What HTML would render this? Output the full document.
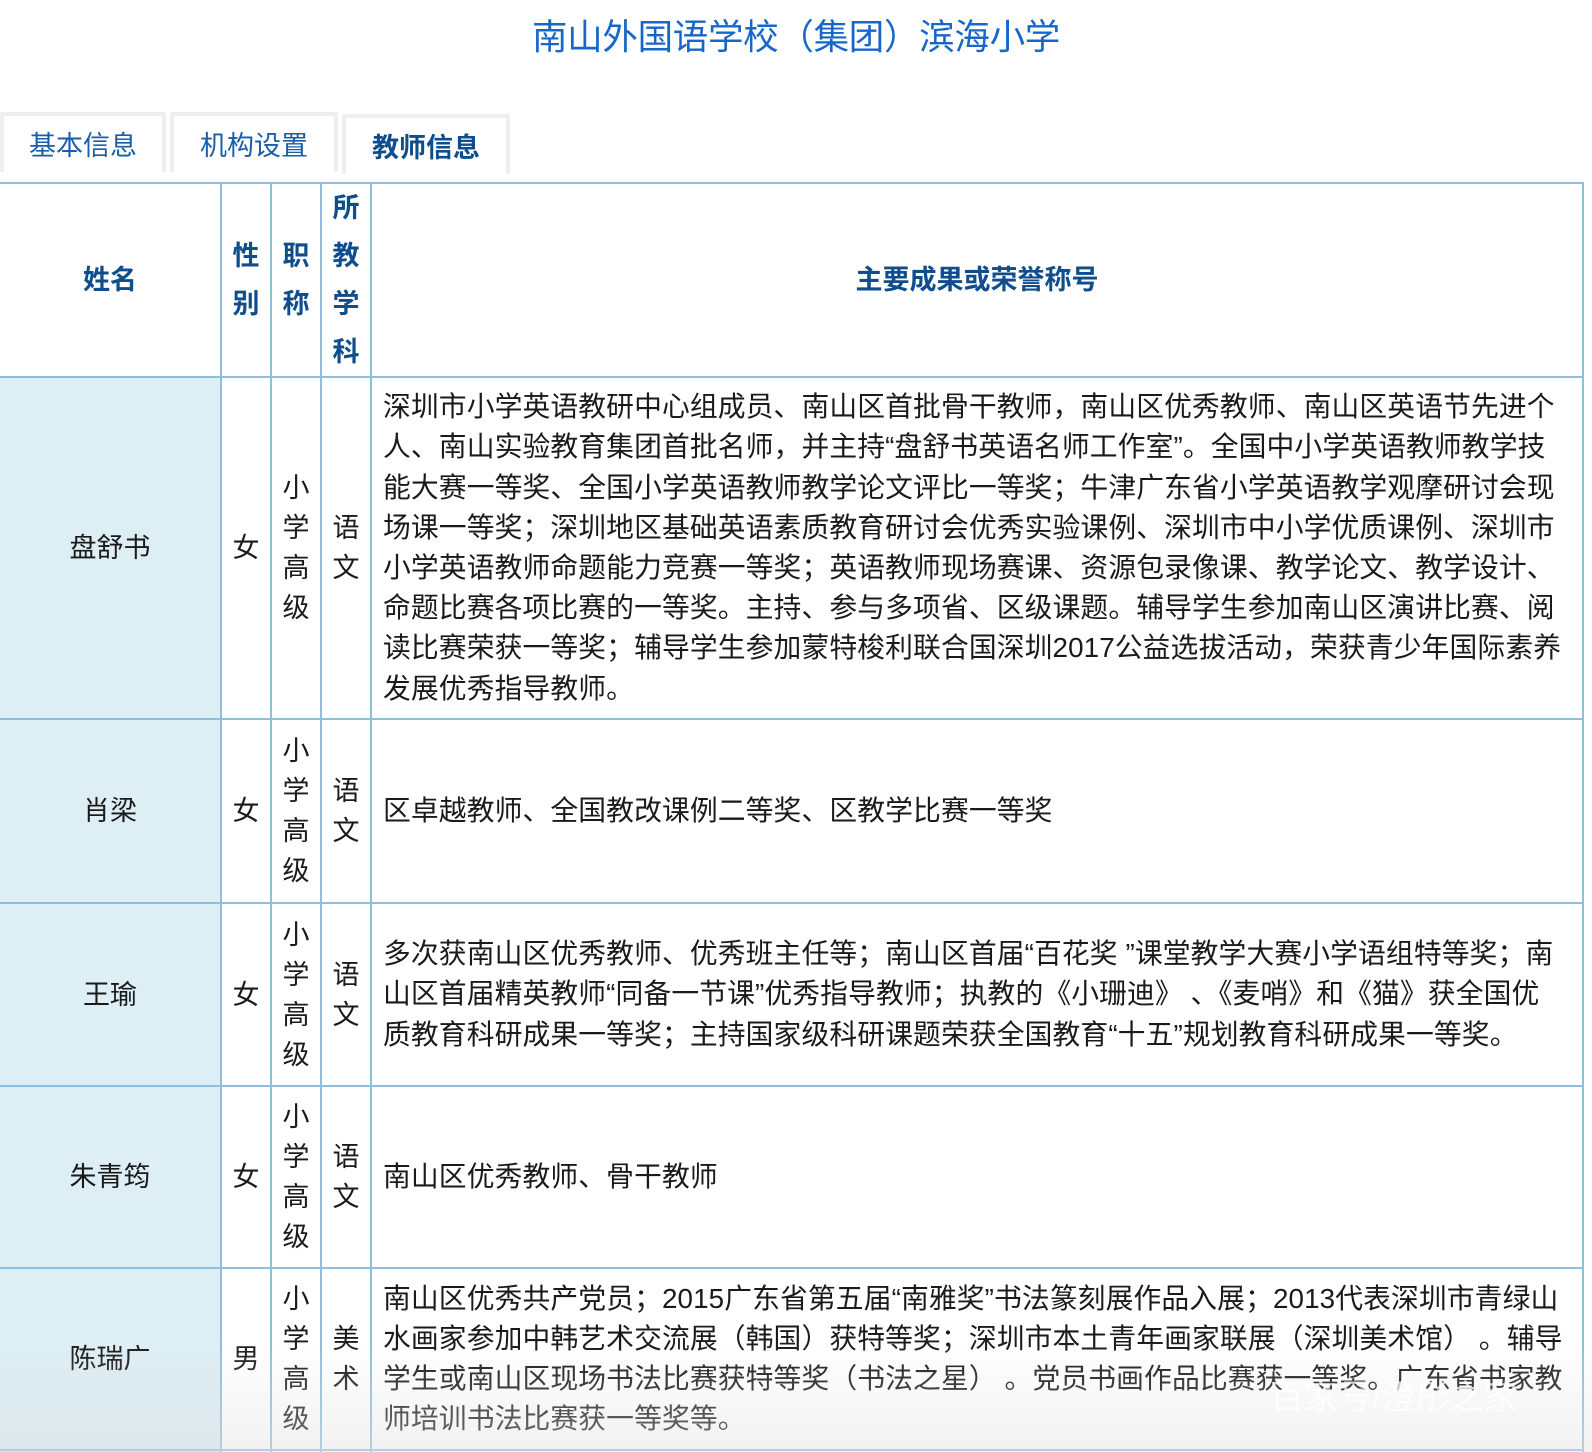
<!DOCTYPE html>
<html><head><meta charset="utf-8"><style>
*{margin:0;padding:0;box-sizing:border-box}
body{width:1592px;height:1452px;background:#fff;position:relative;overflow:hidden;font-family:"Liberation Sans","Noto Sans CJK SC",sans-serif;color:#1a1a1a}
.title{position:absolute;top:13px;left:0;width:1592px;text-align:center;font-size:35.5px;color:#1667c9;line-height:48px;letter-spacing:-0.3px}
.tab{position:absolute;border:4px solid #efefef;border-bottom:none;height:60px;color:#1a5ea8;font-size:27px;text-align:center;line-height:60px}
.hl,.vl{position:absolute;background:#8fbfdc}
.hl{height:2px;left:0;width:1584px}
.vl{width:2px;top:182px;height:1270px}
.c{position:absolute;display:flex;align-items:center;justify-content:center;text-align:center;font-size:27px;line-height:40px}
.h{color:#0f4d8c;font-weight:bold;line-height:48px}
.t{position:absolute;display:flex;align-items:center;left:383px;width:1200px;font-size:27.8px;line-height:40.2px;white-space:nowrap;letter-spacing:0.1px}
.bg{position:absolute;left:0;width:220px;background:#ddeef5}
</style></head><body>
<div class="title">南山外国语学校（集团）滨海小学</div>
<div class="tab" style="left:0;top:112px;width:166px">基本信息</div>
<div class="tab" style="left:170px;top:112px;width:168px">机构设置</div>
<div class="tab" style="left:342px;top:114px;width:168px;font-weight:bold;color:#0f4d8c">教师信息</div>

<div class="bg" style="top:378px;height:1074px"></div>

<div class="hl" style="top:182px"></div>
<div class="hl" style="top:376px"></div>
<div class="hl" style="top:718px"></div>
<div class="hl" style="top:902px"></div>
<div class="hl" style="top:1085px"></div>
<div class="hl" style="top:1267px"></div>
<div class="hl" style="top:1449px"></div>
<div class="vl" style="left:220px"></div>
<div class="vl" style="left:270px"></div>
<div class="vl" style="left:320px"></div>
<div class="vl" style="left:370px"></div>
<div class="vl" style="left:1582px"></div>

<div class="c h" style="left:0;top:184px;width:220px;height:192px">姓名</div>
<div class="c h" style="left:222px;top:184px;width:48px;height:192px">性<br>别</div>
<div class="c h" style="left:272px;top:184px;width:48px;height:192px">职<br>称</div>
<div class="c h" style="left:322px;top:184px;width:48px;height:192px">所<br>教<br>学<br>科</div>
<div class="c h" style="left:372px;top:184px;width:1210px;height:192px">主要成果或荣誉称号</div>

<div class="c" style="left:0;top:378px;width:220px;height:340px">盘舒书</div>
<div class="c" style="left:222px;top:378px;width:48px;height:340px">女</div>
<div class="c" style="left:272px;top:378px;width:48px;height:340px">小<br>学<br>高<br>级</div>
<div class="c" style="left:322px;top:378px;width:48px;height:340px">语<br>文</div>
<div class="t" style="top:378px;height:340px"><div>深圳市小学英语教研中心组成员、南山区首批骨干教师，南山区优秀教师、南山区英语节先进个<br>人、南山实验教育集团首批名师，并主持“盘舒书英语名师工作室”。全国中小学英语教师教学技<br>能大赛一等奖、全国小学英语教师教学论文评比一等奖；牛津广东省小学英语教学观摩研讨会现<br>场课一等奖；深圳地区基础英语素质教育研讨会优秀实验课例、深圳市中小学优质课例、深圳市<br>小学英语教师命题能力竞赛一等奖；英语教师现场赛课、资源包录像课、教学论文、教学设计、<br>命题比赛各项比赛的一等奖。主持、参与多项省、区级课题。辅导学生参加南山区演讲比赛、阅<br>读比赛荣获一等奖；辅导学生参加蒙特梭利联合国深圳2017公益选拔活动，荣获青少年国际素养<br>发展优秀指导教师。</div></div>

<div class="c" style="left:0;top:720px;width:220px;height:182px">肖梁</div>
<div class="c" style="left:222px;top:720px;width:48px;height:182px">女</div>
<div class="c" style="left:272px;top:720px;width:48px;height:182px">小<br>学<br>高<br>级</div>
<div class="c" style="left:322px;top:720px;width:48px;height:182px">语<br>文</div>
<div class="t" style="top:720px;height:182px"><div>区卓越教师、全国教改课例二等奖、区教学比赛一等奖</div></div>

<div class="c" style="left:0;top:904px;width:220px;height:181px">王瑜</div>
<div class="c" style="left:222px;top:904px;width:48px;height:181px">女</div>
<div class="c" style="left:272px;top:904px;width:48px;height:181px">小<br>学<br>高<br>级</div>
<div class="c" style="left:322px;top:904px;width:48px;height:181px">语<br>文</div>
<div class="t" style="top:904px;height:181px"><div>多次获南山区优秀教师、优秀班主任等；南山区首届“百花奖 ”课堂教学大赛小学语组特等奖；南<br>山区首届精英教师“同备一节课”优秀指导教师；执教的《小珊迪》 、《麦哨》和《猫》获全国优<br>质教育科研成果一等奖；主持国家级科研课题荣获全国教育“十五”规划教育科研成果一等奖。</div></div>

<div class="c" style="left:0;top:1087px;width:220px;height:180px">朱青筠</div>
<div class="c" style="left:222px;top:1087px;width:48px;height:180px">女</div>
<div class="c" style="left:272px;top:1087px;width:48px;height:180px">小<br>学<br>高<br>级</div>
<div class="c" style="left:322px;top:1087px;width:48px;height:180px">语<br>文</div>
<div class="t" style="top:1087px;height:180px"><div>南山区优秀教师、骨干教师</div></div>

<div class="c" style="left:0;top:1269px;width:220px;height:180px">陈瑞广</div>
<div class="c" style="left:222px;top:1269px;width:48px;height:180px">男</div>
<div class="c" style="left:272px;top:1269px;width:48px;height:180px">小<br>学<br>高<br>级</div>
<div class="c" style="left:322px;top:1269px;width:48px;height:180px">美<br>术</div>
<div class="t" style="top:1269px;height:180px"><div>南山区优秀共产党员；2015广东省第五届“南雅奖”书法篆刻展作品入展；2013代表深圳市青绿山<br>水画家参加中韩艺术交流展（韩国）获特等奖；深圳市本土青年画家联展（深圳美术馆） 。辅导<br>学生或南山区现场书法比赛获特等奖（书法之星） 。党员书画作品比赛获一等奖。广东省书家教<br>师培训书法比赛获一等奖等。</div></div>

<div style="position:absolute;left:0;top:1340px;width:1592px;height:112px;background:linear-gradient(rgba(240,240,240,0),rgba(225,225,225,0.45))"></div>
<div style="position:absolute;left:1270px;top:1370px;font-size:34px;color:rgba(255,255,255,0.75);white-space:nowrap">百家号/澄彤之家</div>
</body></html>
